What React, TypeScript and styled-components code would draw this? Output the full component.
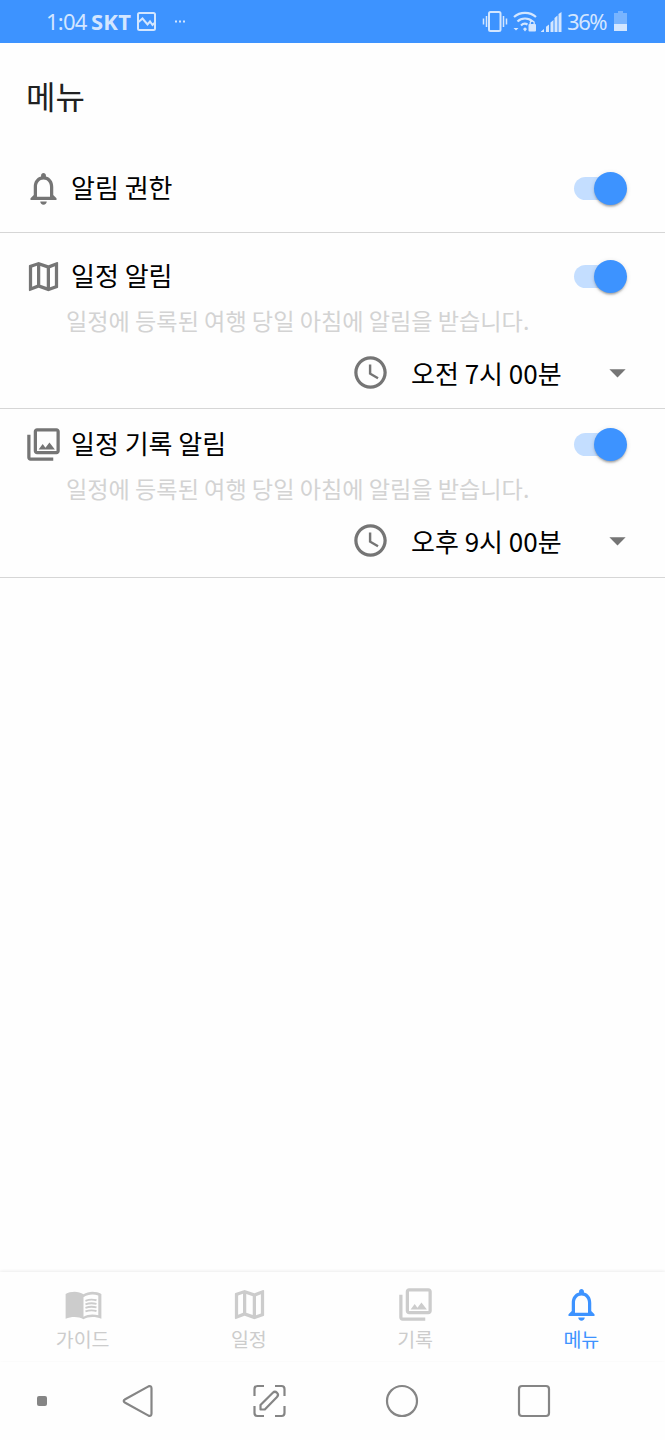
import React, { useState } from "react";
import styled, { createGlobalStyle } from "styled-components";
import {
  MdAccessTime,
  MdArrowDropDown,
  MdNotificationsNone,
  MdOutlineMap,
  MdOutlinePhotoLibrary,
} from "react-icons/md";

const GlobalStyle = createGlobalStyle`
  *, *::before, *::after { box-sizing: border-box; }
  body {
    margin: 0;
    background: #fff;
    font-family: "Noto Sans CJK KR", "Noto Sans", sans-serif;
  }
  button { font: inherit; border: 0; padding: 0; background: none; }
`;

const Screen = styled.div`
  width: 665px;
  height: 1440px;
  display: flex;
  flex-direction: column;
  overflow: hidden;
  background: #fefefe;
  color: #000;
`;

const StatusBar = styled.div`
  height: 43px;
  flex: none;
  display: flex;
  justify-content: space-between;
  align-items: center;
  padding: 0 38px 0 46px;
  background: #3d93ff;
  color: #d3e6ff;
  font-family: "Noto Sans", sans-serif;
  font-size: 22px;
  line-height: 43px;
`;

const StatusGroup = styled.div`
  display: flex;
  align-items: center;
`;

const StatusText = styled.span<{ $bold?: boolean; $width: number; $gap?: number; $spacing?: number }>`
  width: ${(p) => p.$width}px;
  margin-left: ${(p) => p.$gap ?? 0}px;
  font-weight: ${(p) => (p.$bold ? 700 : 400)};
  letter-spacing: ${(p) => p.$spacing ?? 0}px;
  white-space: nowrap;
`;

const Glyph = styled.svg<{ $gap?: number }>`
  display: block;
  flex: none;
  margin-left: ${(p) => p.$gap ?? 0}px;
`;

const Title = styled.h1`
  margin: 0;
  height: 102px;
  flex: none;
  padding: 28px 26px 0;
  font-size: 32px;
  line-height: 48px;
  font-weight: 400;
  color: #212121;
`;

const Section = styled.section<{ $height: number; $top: number }>`
  height: ${(p) => p.$height}px;
  flex: none;
  padding: ${(p) => p.$top}px 38px 0 24px;
  border-bottom: 1px solid #d6d6d6;
`;

const SettingRow = styled.div`
  height: 40px;
  display: flex;
  align-items: center;
`;

const RowIcon = styled.span`
  display: flex;
  width: 39px;
  font-size: 39px;
  color: #757575;
`;

const RowLabel = styled.span`
  flex: 1;
  margin-left: 8px;
  padding-bottom: 2px;
  font-size: 26px;
  line-height: 38px;
`;

const ToggleButton = styled.button<{ $on: boolean }>`
  width: 53px;
  height: 33px;
  display: flex;
  flex-direction: ${(p) => (p.$on ? "row" : "row-reverse")};
  align-items: center;
`;

const ToggleTrack = styled.span<{ $on: boolean }>`
  flex: 1;
  height: 23px;
  margin: ${(p) => (p.$on ? "0 -16px 0 0" : "0 0 0 -16px")};
  border-radius: 12px;
  background: ${(p) => (p.$on ? "#c4deff" : "#bdbdbd")};
`;

const ToggleThumb = styled.span<{ $on: boolean }>`
  width: 33px;
  height: 33px;
  border-radius: 50%;
  background: ${(p) => (p.$on ? "#3d93ff" : "#fafafa")};
  box-shadow: 0 3px 2px -2px rgba(0, 0, 0, 0.2), 0 2px 2px rgba(0, 0, 0, 0.14), 0 1px 5px rgba(0, 0, 0, 0.12);
`;

const Description = styled.p`
  margin: 4px 0 0 42px;
  font-size: 23.15px;
  line-height: 40px;
  color: #d3d3d3;
  white-space: nowrap;
`;

const TimeRow = styled.div`
  height: 40px;
  margin-top: 12px;
  display: flex;
  align-items: center;
  justify-content: flex-end;
  font-size: 39px;
  color: #757575;
`;

const TimeSelect = styled.button`
  width: 226px;
  margin: 0 -10px 0 21px;
  display: flex;
  align-items: center;
  justify-content: space-between;
  color: #757575;
`;

const TimeValue = styled.span`
  padding-top: 2px;
  font-size: 26px;
  line-height: 38px;
  color: #000;
  white-space: nowrap;
`;

const ArrowIcon = styled(MdArrowDropDown)`
  font-size: 39px;
`;

const Spacer = styled.div`
  flex: 1;
`;

const TabBar = styled.nav`
  height: 89px;
  flex: none;
  display: grid;
  grid-template-columns: repeat(4, 1fr);
  box-shadow: 0 -1px 3px rgba(0, 0, 0, 0.07);
`;

const Tab = styled.button<{ $active?: boolean }>`
  display: flex;
  flex-direction: column;
  align-items: center;
  padding-top: 13px;
  color: ${(p) => (p.$active ? "#3d93ff" : "#cccccc")};
  font-size: 39px;
`;

const TabLabel = styled.span`
  font-size: 19.5px;
  line-height: 29px;
  margin-left: -1px;
`;

const SystemBar = styled.div`
  height: 79px;
  flex: none;
  display: grid;
  grid-template-columns: 71px repeat(4, 132.4px);
  align-items: center;
  justify-items: center;
  padding-top: 1px;
`;

const Dot = styled.span`
  width: 10px;
  height: 10px;
  margin-left: 12px;
  border-radius: 2px;
  background: #858585;
`;

function BookIcon() {
  return (
    <svg width="1em" height="1em" viewBox="0 0 24 24" fill="currentColor">
      <path
        fillRule="evenodd"
        d="M12 5.700C10.500 4.600 8.400 4.100 6.500 4.100S2.400 4.500 1 5.600v15.100c1.700-.7 3.600-1 5.500-1s4 .4 5.500 1.400c1.500-1 3.600-1.400 5.500-1.400s3.800.3 5.500 1V5.600c-1.400-1.100-3.600-1.500-5.500-1.500s-4 .5-5.500 1.600zm0 1.800c1.500-1.200 3.600-1.700 5.500-1.700 1.200 0 2.500.2 3.600.6v12.200c-1.100-.3-2.400-.5-3.600-.5-1.900 0-4 .5-5.500 1.500z"
      />
      <path
        d="M13.200 9.700c2.100-.8 4.500-.9 6.800-.3M13.200 11.900c2.100-.8 4.500-.9 6.800-.3M13.200 14.100c2.100-.8 4.500-.9 6.800-.3M13.200 16.300c2.100-.8 4.500-.9 6.800-.3"
        fill="none"
        stroke="currentColor"
        strokeWidth="1.15"
      />
    </svg>
  );
}

function StatusLeft() {
  return (
    <StatusGroup>
      <StatusText $width={45} $spacing={-0.8}>1:04</StatusText>
      <StatusText $width={40} $spacing={0.2} $bold>SKT</StatusText>
      <Glyph width="19" height="19" viewBox="0 0 19 19" fill="none" stroke="currentColor" strokeWidth="2" $gap={6}>
        <rect x="1" y="1" width="17" height="17" rx="1.5" />
        <path d="M1.500 10 5.500 6.500l5 6 2.500-3 2.500 3.500 2-2" />
      </Glyph>
      <Glyph width="11" height="3" viewBox="0 0 11 3" fill="currentColor" $gap={19}>
        <rect x="0" y=".5" width="2" height="2" />
        <rect x="4" y=".5" width="2" height="2" />
        <rect x="8" y=".5" width="2" height="2" />
      </Glyph>
    </StatusGroup>
  );
}

function StatusRight() {
  return (
    <StatusGroup>
      <Glyph width="26" height="21" viewBox="0 0 26 21" fill="none" stroke="currentColor">
        <rect x="7" y="1" width="11.5" height="19" rx="1.500" strokeWidth="2" />
        <path d="M4.500 5v11M21.500 5v11M1.500 7.500v6M24.500 7.500v6" strokeWidth="1.500" />
      </Glyph>
      <Glyph width="24" height="21" viewBox="0 0 24 21" fill="none" stroke="currentColor" strokeWidth="2.200" $gap={5}>
        <path d="M1 6c6-5.500 16-5.500 22 0M4.500 10.500c4-4 11-4 15 0M8 14.500c2-2 4.500-2.200 6.500-1" />
        <path d="m10 18 2-1.700 2 1.700-2 2.500zM.5 17h5L3 19.500z" fill="currentColor" stroke="none" />
        <rect x="15.500" y="13" width="7.500" height="7.500" rx="1" fill="currentColor" stroke="none" />
        <path d="M17.200 13.500v-1.600c0-2.400 4-2.400 4 0v1.600" strokeWidth="1.300" />
      </Glyph>
      <Glyph width="21" height="20" viewBox="0 0 21 20" fill="currentColor" $gap={4}>
        <path d="M0 20v-.5l3-2.500v3zM5 14.800l3-2.300V20H5zM9.500 10.500l3-2.500v12h-3zM13.500 6l3-2.500V20h-3zM17.500 2l3-2v20h-3z" />
      </Glyph>
      <StatusText $width={40} $gap={5} $spacing={-1.4}>36%</StatusText>
      <Glyph width="13" height="21" viewBox="0 0 13 21" fill="currentColor" $gap={7}>
        <path d="M4 0h5v2h4v11H0V2h4z" opacity=".4" />
        <path d="M0 13h13v7H0z" />
      </Glyph>
    </StatusGroup>
  );
}

function Switch({ label }: { label: string }) {
  const [on, setOn] = useState(true);
  return (
    <ToggleButton $on={on} role="switch" aria-checked={on} aria-label={label} onClick={() => setOn(!on)}>
      <ToggleTrack $on={on} />
      <ToggleThumb $on={on} />
    </ToggleButton>
  );
}

interface SettingProps {
  icon: React.ReactNode;
  label: string;
  height: number;
  top: number;
  description?: string;
  time?: string;
}

function Setting({ icon, label, height, top, description, time }: SettingProps) {
  return (
    <Section $height={height} $top={top}>
      <SettingRow>
        <RowIcon>{icon}</RowIcon>
        <RowLabel>{label}</RowLabel>
        <Switch label={label} />
      </SettingRow>
      {description && <Description>{description}</Description>}
      {time && (
        <TimeRow>
          <MdAccessTime />
          <TimeSelect>
            <TimeValue>{time}</TimeValue>
            <ArrowIcon />
          </TimeSelect>
        </TimeRow>
      )}
    </Section>
  );
}

const tabs = [
  { icon: <BookIcon />, label: "가이드" },
  { icon: <MdOutlineMap />, label: "일정" },
  { icon: <MdOutlinePhotoLibrary />, label: "기록" },
  { icon: <MdNotificationsNone />, label: "메뉴", active: true },
];

const notice = "일정에 등록된 여행 당일 아침에 알림을 받습니다.";

export default function App() {
  return (
    <>
      <GlobalStyle />
      <Screen>
        <StatusBar>
          <StatusLeft />
          <StatusRight />
        </StatusBar>
        <Title>메뉴</Title>
        <Setting icon={<MdNotificationsNone />} label="알림 권한" height={88} top={23} />
        <Setting icon={<MdOutlineMap />} label="일정 알림" height={176} top={23} description={notice} time="오전 7시 00분" />
        <Setting icon={<MdOutlinePhotoLibrary />} label="일정 기록 알림" height={169} top={15} description={notice} time="오후 9시 00분" />
        <Spacer />
        <TabBar>
          {tabs.map((tab) => (
            <Tab key={tab.label} $active={tab.active}>
              {tab.icon}
              <TabLabel>{tab.label}</TabLabel>
            </Tab>
          ))}
        </TabBar>
        <SystemBar>
          <Dot />
          <Glyph width="34" height="34" viewBox="0 0 34 34" fill="none" stroke="#858585" strokeWidth="2.2">
            <path d="M28.500 2.400 5.200 15.200q-3 1.800 0 3.600l23.300 12.800q3 1 3-2V4.400q0-3-3-2z" strokeLinejoin="round" />
          </Glyph>
          <Glyph width="34" height="34" viewBox="1 0 34 34" fill="none" stroke="#858585" strokeWidth="2.2">
            <path d="M2 12V5q0-3 3-3h6.500M22.500 2H29q3 0 3 3v7M32 22v7q0 3-3 3h-6.500M11.500 32H5q-3 0-3-3v-7" transform="translate(.5)" />
            <path d="M8.500 25.500v-4.500L20.800 8.800a2.900 2.900 0 0 1 4.200 4.200L12.800 25.500z" strokeLinejoin="round" />
          </Glyph>
          <Glyph width="34" height="34" viewBox="0 0 34 34" fill="none" stroke="#858585" strokeWidth="2.2">
            <circle cx="17" cy="17" r="15" />
          </Glyph>
          <Glyph width="34" height="34" viewBox="0 0 34 34" fill="none" stroke="#858585" strokeWidth="2.2">
            <rect x="2" y="2" width="30" height="30" rx="3" />
          </Glyph>
        </SystemBar>
      </Screen>
    </>
  );
}
